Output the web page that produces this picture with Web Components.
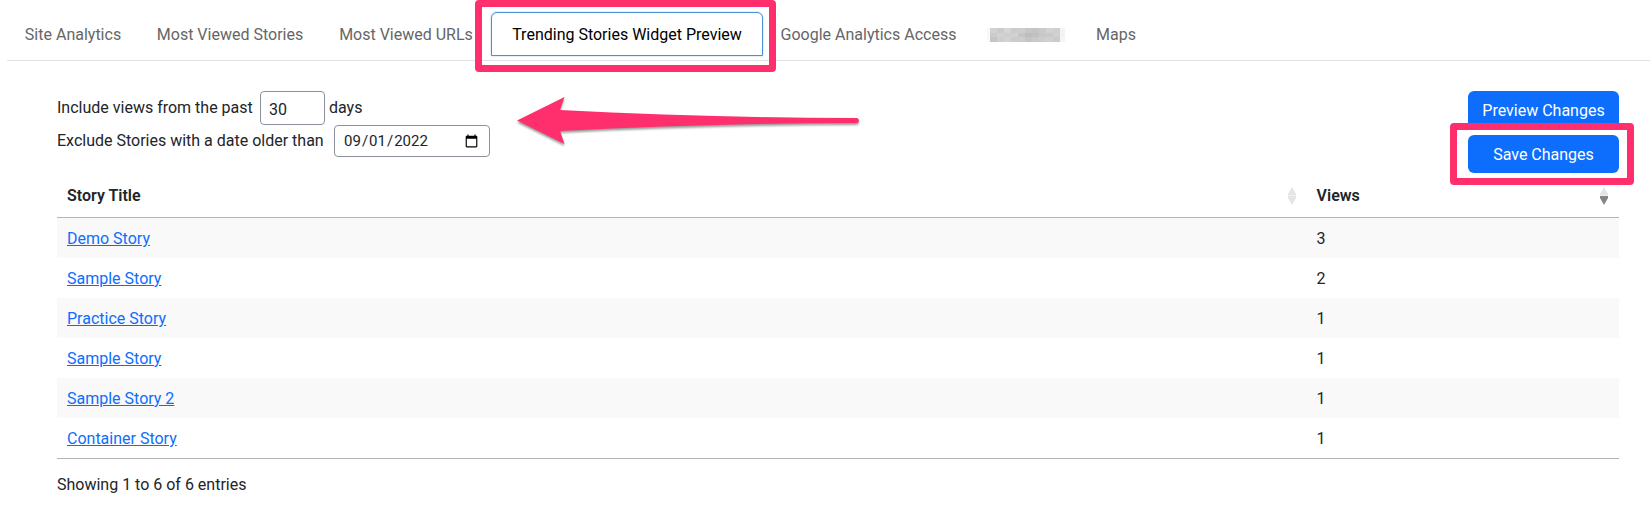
<!DOCTYPE html>
<html lang="en">
<head>
<meta charset="utf-8">
<title>Trending Stories Widget Preview</title>
<style>
body { margin: 0; background: #fff; color: #212529; font: 16px/24px Roboto, "Liberation Sans", sans-serif; }
</style>
</head>
<body>
<analytics-page></analytics-page>
<script>
const define = (name, html, setup) => {
  const template = document.createElement('template');
  template.innerHTML = html;
  customElements.define(name, class extends HTMLElement {
    constructor() {
      super();
      this.attachShadow({ mode: 'open' }).append(template.content.cloneNode(true));
    }
    connectedCallback() { if (setup) setup(this, this.shadowRoot); }
  });
};

define('highlight-frame', `
<style>
  :host { display: block; position: absolute; inset: var(--frame-inset, -12px -13px -16px -16px); border: 7px solid #ff2f6e; border-radius: 4px; pointer-events: none; z-index: 2; }
</style>`);

define('nav-tab', `
<style>
  :host { display: block; position: relative; }
  a { display: block; padding: 10px 16px 8px; border: 1px solid transparent; color: #666; text-align: center; text-decoration: none; white-space: nowrap; border-radius: 6px 6px 0 0; }
  :host([active]) a { color: #000; background: #fff; border-color: #4a90d9; box-shadow: 0 0 2px #9cc8f0; }
</style>
<a href="#"><slot></slot></a>
<slot name="mark"></slot>`);

define('redacted-name', `
<style>
  :host { display: block; }
  svg { display: block; width: 78px; height: 24px; margin-left: -4px; }
</style>
<svg viewBox="0 0 78 24" role="img" aria-label="Hidden tab name"></svg>`, (host, root) => {
  const svg = root.querySelector('svg');
  const rows = [
    ['f8', 'd2', 'cb', 'd6', 'cc', 'ce', 'c7', 'c5', 'ca', 'd3', 'cf', 'f4'],
    ['f8', 'cb', 'd2', 'ce', 'd2', 'c5', 'bd', 'c0', 'c8', 'c9', 'd1', 'f2'],
    ['fa', 'c5', 'ce', 'd3', 'cb', 'cd', 'c4', 'c9', 'cc', 'd0', 'cb', 'f5']
  ];
  let out = '';
  rows.forEach((row, y) => row.forEach((c, x) => {
    const left = x ? 3 + (x - 1) * 7 : 0;
    const width = x ? (x === 11 ? 5 : 7) : 3;
    out += `<rect x="${left}" y="${[5, 10, 14][y]}" width="${width}" height="${[5, 4, 5][y]}" fill="#${c}${c}${c}"/>`;
  }));
  svg.innerHTML = out;
});

define('tab-bar', `
<style>
  :host { display: block; margin-left: 7px; padding: 12px 0 4px; border-bottom: 1px solid #dee2e6; }
  nav { display: grid; grid-template-columns: 132px 182px 170px 272px 211px 105px max-content; }
</style>
<nav aria-label="Reports"><slot></slot></nav>`);

define('action-button', `
<style>
  :host { display: block; position: relative; }
  button { display: block; width: 100%; height: 38px; padding: 2px 12px 0; border: 0; border-radius: 6px; background: #0d6efd; color: #fff; font: inherit; white-space: nowrap; }
</style>
<button type="button"><slot></slot></button>
<slot name="mark"></slot>`);

define('pointer-arrow', `
<style>
  :host { display: block; position: absolute; left: 460px; top: 5px; z-index: 1; pointer-events: none; }
  svg { display: block; overflow: visible; filter: drop-shadow(0 2px 1px #0006); }
</style>
<svg width="343" height="50" viewBox="0 0 343 50" aria-hidden="true">
  <path fill="#ff2f6e" d="M0 24.500L47.500 1L43 14C140 19 240 22 340 22Q342 22.500 342 24.500Q342 26.500 340 27C240 27 140 30 43 35L47.500 48Z"/>
</svg>`);

define('filter-form', `
<style>
  :host { display: flex; justify-content: space-between; align-items: flex-start; position: relative; }
  .row { display: flex; align-items: center; gap: 4px; }
  .row:first-child { line-height: 26px; }
  input { box-sizing: border-box; height: 34px; margin: 0; padding: 2px 8px 0; border: 1px solid #8f8f9d; border-radius: 4px; background: #fff; color: #212529; font: inherit; }
  label { min-width: 199px; }
  label[for="date"] { min-width: 273px; }
  #days { width: 65px; }
  #date { width: 156px; height: 32px; padding: 0 8px; font-size: 15px; }
  .actions { display: grid; gap: 6px; min-width: 151px; }
</style>
<form>
  <div class="row"><label for="days">Include views from the past</label><input id="days" type="text" inputmode="numeric" value="30"><span>days</span></div>
  <div class="row"><label for="date">Exclude Stories with a date older than</label><input id="date" type="date" value="2022-09-01"></div>
</form>
<div class="actions"><slot></slot></div>
<pointer-arrow></pointer-arrow>`);

define('sort-arrows', `
<style>
  :host { display: block; }
  svg { display: block; }
  path { fill: #e4e4e4; }
  :host([order="desc"]) .down { fill: #858585; }
</style>
<svg width="8" height="18" viewBox="0 0 8 18" aria-hidden="true">
  <path d="M4 0L8 7V8.500H0V7Z"/><path class="down" d="M4 18L8 11V9H0V11Z"/>
</svg>`);

define('story-table', `
<style>
  :host { display: block; }
  table { width: 100%; table-layout: fixed; border-collapse: separate; border-spacing: 0; border-bottom: 1px solid #b3b3b3; }
  th { padding: 11px 11px 9px 10px; border-bottom: 1px solid #b3b3b3; text-align: left; font-weight: 600; }
  th:last-child { width: 20%; box-sizing: border-box; }
  th div { display: flex; justify-content: space-between; align-items: center; }
  td { padding: 9px 10px 7px; }
  tbody tr:nth-child(odd) { background: #f9f9f9; }
  a { color: #0d6efd; text-decoration: underline; }
  p { margin: 14px 0 0; }
</style>
<table>
  <thead><tr>
    <th scope="col"><div>Story Title<sort-arrows></sort-arrows></div></th>
    <th scope="col" aria-sort="descending"><div>Views<sort-arrows order="desc"></sort-arrows></div></th>
  </tr></thead>
  <tbody></tbody>
</table>
<p></p>`, (host, root) => {
  const stories = [['Demo Story', 3], ['Sample Story', 2], ['Practice Story', 1], ['Sample Story', 1], ['Sample Story 2', 1], ['Container Story', 1]];
  root.querySelector('tbody').innerHTML = stories.map(([title, views]) => `<tr><td><a href="#">${title}</a></td><td>${views}</td></tr>`).join('');
  root.querySelector('p').textContent = `Showing 1 to ${stories.length} of ${stories.length} entries`;
});

define('analytics-page', `
<style>
  :host { display: block; }
  main { padding: 30px 31px 16px 57px; }
  .save { --frame-inset: -12px -15px -12px -18px; }
</style>
<tab-bar>
  <nav-tab>Site Analytics</nav-tab>
  <nav-tab>Most Viewed Stories</nav-tab>
  <nav-tab>Most Viewed URLs</nav-tab>
  <nav-tab active>Trending Stories Widget Preview<highlight-frame slot="mark"></highlight-frame></nav-tab>
  <nav-tab>Google Analytics Access</nav-tab>
  <nav-tab><redacted-name></redacted-name></nav-tab>
  <nav-tab>Maps</nav-tab>
</tab-bar>
<main>
  <filter-form>
    <action-button>Preview Changes</action-button>
    <action-button class="save">Save Changes<highlight-frame slot="mark"></highlight-frame></action-button>
  </filter-form>
  <story-table></story-table>
</main>`);
</script>
</body>
</html>
